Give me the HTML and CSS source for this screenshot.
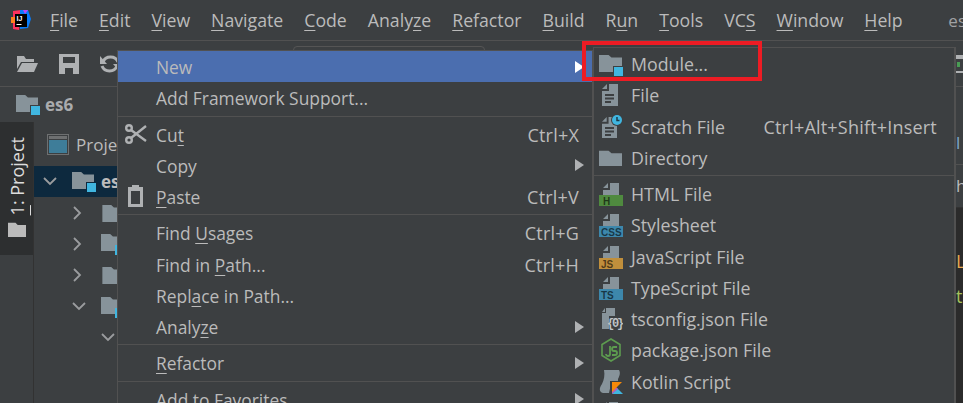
FILE: index.html
```html
<!DOCTYPE html>
<html lang="en">
<head>
<meta charset="utf-8">
<title>IDE</title>
<link rel="stylesheet" href="styles.css">
</head>
<body>
<svg class="defs" width="0" height="0">
<defs>
<symbol id="folder" viewBox="0 0 24 20" preserveAspectRatio="none"><path d="M0 1h10l3 3h11v16H0z"/></symbol>
<symbol id="doc" viewBox="0 0 16 22" preserveAspectRatio="none"><path d="M7 0h9v22H0V7h7z"/><path d="M5 0v5H0z"/></symbol>
</defs>
</svg>
<div class="ide">
<header class="menubar">
<svg class="logo" width="20" height="20" viewBox="0 0 20 20"><path fill="#fe315d" d="M2 1 10 0 8 20l-6-1z"/><path fill="#087cfa" d="M9 0h8l3 9-3 9-8 1z"/><path fill="#b74af7" d="M12 0h5l-3 4z"/><path fill="#fc801d" d="M0 7h5v6H0z"/><rect x="4" y="4" width="12" height="13" fill="#000"/><text x="5.500" y="10.500" class="logo-t">IJ</text><rect x="5.500" y="14" width="5" height="1" fill="#fff"/></svg>
<nav class="menus">
<span><u>F</u>ile</span><span><u>E</u>dit</span><span><u>V</u>iew</span><span><u>N</u>avigate</span><span><u>C</u>ode</span><span>Analy<u>z</u>e</span><span><u>R</u>efactor</span><span><u>B</u>uild</span><span>R<u>u</u>n</span><span><u>T</u>ools</span><span>VC<u>S</u></span><span><u>W</u>indow</span><span><u>H</u>elp</span>
</nav>
<span class="title">es</span>
</header>
<div class="toolbar">
<svg width="22" height="18" viewBox="0 0 22 18" fill="#afb1b3"><path d="M1 1h7l2 3h8v3H5L1 14z"/><path d="M6 8h16l-4 9H1z"/></svg>
<svg width="20" height="20" viewBox="0 0 20 20" fill="#afb1b3"><path fill-rule="evenodd" d="M0 0h20v20H0zM4 3v6h12V3zM6 14v6h8v-6z"/></svg>
<svg width="20" height="20" viewBox="0 0 20 20" fill="none" stroke="#afb1b3" stroke-width="3"><path d="M3 8a8 7.500 0 0 1 15 0M17 12a8 7.500 0 0 1-15 0"/><path fill="#afb1b3" stroke="none" d="M0 2v8h7zM20 18v-8h-7z"/></svg>
<div class="searchbox"></div>
<div class="runbox"><i class="runbar"></i><i class="runplay"></i><i class="runline"></i></div>
</div>
<div class="crumbs">
<svg class="ic" width="24" height="24" viewBox="0 0 24 24"><use href="#folder" width="22" height="18" y="1" fill="#87939a"/><rect x="14" y="12" width="10" height="10" fill="#3d3f41"/><rect x="15" y="13" width="9" height="9" fill="#40b6e0"/></svg>
<b>es6</b>
</div>
<div class="body">
<aside class="stripe">
<div class="stripe-tab">
<span class="stripe-label"><u>1</u>: Project</span>
<svg width="18" height="15" viewBox="0 0 24 20"><use href="#folder" width="24" height="20" fill="#bbb"/></svg>
</div>
</aside>
<section class="project">
<div class="project-head">
<svg width="22" height="21" viewBox="0 0 22 21"><rect x="0.500" y="0.500" width="21" height="20" fill="none" stroke="#6e7071"/><rect x="2" y="2" width="18" height="3" fill="#6e7071"/><rect x="2" y="6" width="18" height="13" fill="#3e7d99"/></svg>
<span>Project</span>
</div>
<div class="tree">
<div class="row row-sel"><svg class="chev" width="14" height="9" viewBox="0 0 14 9"><path d="M1 1l6 6 6-6"/></svg><svg width="24" height="24" viewBox="0 0 24 24"><use href="#folder" width="22" height="18" y="1" fill="#87939a"/><rect x="14" y="12" width="10" height="10" fill="#0d293e"/><rect x="15" y="13" width="9" height="9" fill="#40b6e0"/></svg><b>es6</b></div>
<div class="row row-l1"><svg class="chev" width="9" height="14" viewBox="0 0 9 14"><path d="M1 1l6 6-6 6"/></svg><svg width="24" height="18" viewBox="0 0 24 20"><use href="#folder" width="24" height="20" fill="#87939a"/></svg></div>
<div class="row row-l1"><svg class="chev" width="9" height="14" viewBox="0 0 9 14"><path d="M1 1l6 6-6 6"/></svg><svg width="24" height="24" viewBox="0 0 24 24"><use href="#folder" width="22" height="18" y="1" fill="#87939a"/><rect x="14" y="13" width="10" height="10" fill="#40b6e0"/></svg></div>
<div class="row row-l1"><svg class="chev" width="9" height="14" viewBox="0 0 9 14"><path d="M1 1l6 6-6 6"/></svg><svg width="24" height="18" viewBox="0 0 24 20"><use href="#folder" width="24" height="20" fill="#87939a"/></svg></div>
<div class="row row-l1b"><svg class="chev" width="14" height="9" viewBox="0 0 14 9"><path d="M1 1l6 6 6-6"/></svg><svg width="24" height="24" viewBox="0 0 24 24"><use href="#folder" width="22" height="18" y="1" fill="#87939a"/><rect x="14" y="13" width="10" height="10" fill="#40b6e0"/></svg></div>
<div class="row row-l2"><svg class="chev" width="14" height="9" viewBox="0 0 14 9"><path d="M1 1l6 6 6-6"/></svg></div>
</div>
</section>
<section class="editor">
<div class="ed-bar"><span class="c-l">l</span></div>
<div class="ed-bar ed-bar2"><span>h</span></div>
<div class="ed-code"><span class="c-or">L</span><span class="c-gr">t</span></div>
</section>
</div>
</div>

<div class="menu menu-main">
<div class="item active"><span class="lbl">New</span><i class="arrow white"></i></div>
<div class="item"><span class="lbl">Add Framework Support...</span></div>
<hr>
<div class="item"><svg class="mi" width="22" height="22" viewBox="0 0 22 22" fill="none" stroke="#afb1b3" stroke-width="2.400"><circle cx="4" cy="5" r="2.800"/><circle cx="4" cy="17" r="2.800"/><path d="M6 7l15 11M6 15L21 3"/></svg><span class="lbl">Cu<u>t</u></span><span class="key">Ctrl+X</span></div>
<div class="item"><span class="lbl">Copy</span><i class="arrow"></i></div>
<div class="item"><svg class="mi" width="22" height="22" viewBox="0 0 22 22"><path fill="#afb1b3" fill-rule="evenodd" d="M3 2h4V0h7v2h4v20H3zM6 6v13h9V6z"/></svg><span class="lbl"><u>P</u>aste</span><span class="key">Ctrl+V</span></div>
<hr>
<div class="item"><span class="lbl">Find <u>U</u>sages</span><span class="key">Ctrl+G</span></div>
<div class="item"><span class="lbl">Find in <u>P</u>ath...</span><span class="key">Ctrl+H</span></div>
<div class="item"><span class="lbl">Repl<u>a</u>ce in Path...</span></div>
<div class="item"><span class="lbl">Analy<u>z</u>e</span><i class="arrow"></i></div>
<hr>
<div class="item"><span class="lbl"><u>R</u>efactor</span><i class="arrow"></i></div>
<hr>
<div class="item"><span class="lbl">Add to Favorites</span><i class="arrow"></i></div>
</div>

<div class="menu menu-sub">
<div class="item"><svg class="si" viewBox="0 0 24 24"><use href="#folder" width="23" height="18" y="2" fill="#87939a"/><rect x="14" y="14" width="10" height="10" fill="#3c3f41"/><rect x="15" y="15" width="9" height="9" fill="#40b6e0"/></svg><span class="lbl">Module...</span></div>
<div class="item"><svg class="si" viewBox="0 0 24 24"><use href="#doc" x="3" y="1" width="16" height="22" fill="#87939a"/><path stroke="#3c3f41" stroke-width="2" d="M6 12h9M6 15.500h9M6 19h6"/></svg><span class="lbl">File</span></div>
<div class="item"><svg class="si" viewBox="0 0 24 24"><use href="#doc" x="3" y="2" width="15" height="21" fill="#87939a"/><path stroke="#3c3f41" stroke-width="2" d="M6 13h9M6 16.500h9M6 20h6"/><circle cx="18" cy="5" r="6" fill="#3c3f41"/><circle cx="18" cy="5" r="5" fill="#40b6e0"/><path stroke="#1c3a48" stroke-width="1.500" fill="none" d="M18 2v3.500h2.500"/></svg><span class="lbl">Scratch File</span><span class="key">Ctrl+Alt+Shift+Insert</span></div>
<div class="item"><svg class="si" viewBox="0 0 24 24"><use href="#folder" width="23" height="16" y="4" fill="#87939a"/></svg><span class="lbl">Directory</span></div>
<hr>
<div class="item"><svg class="si" viewBox="0 0 24 24"><path fill="#87939a" d="M11 1h9v12H4V8h7zM9 1v5H4z"/><rect y="13" width="24" height="11" fill="#4f8a3f"/><text x="4" y="22.500" class="badge">H</text></svg><span class="lbl">HTML File</span></div>
<div class="item"><svg class="si" viewBox="0 0 24 24"><path fill="#87939a" d="M11 1h9v12H4V8h7zM9 1v5H4z"/><rect y="13" width="24" height="11" fill="#3d87ab"/><text x="2" y="22.500" class="badge">CSS</text></svg><span class="lbl">Stylesheet</span></div>
<div class="item"><svg class="si" viewBox="0 0 24 24"><path fill="#87939a" d="M11 1h9v12H4V8h7zM9 1v5H4z"/><rect y="13" width="24" height="11" fill="#c08f3c"/><text x="2" y="22.500" class="badge">JS</text></svg><span class="lbl">JavaScript File</span></div>
<div class="item"><svg class="si" viewBox="0 0 24 24"><path fill="#87939a" d="M11 1h9v12H4V8h7zM9 1v5H4z"/><rect y="13" width="24" height="11" fill="#3d87ab"/><text x="2" y="22.500" class="badge">TS</text></svg><span class="lbl">TypeScript File</span></div>
<div class="item"><svg class="si" viewBox="0 0 24 24"><path fill="#87939a" d="M7 1h9v8h-6v13H3V6h4zM6 1v4H3z"/><text x="8" y="20" class="brace">{0}</text></svg><span class="lbl">tsconfig.json File</span></div>
<div class="item"><svg class="si" viewBox="0 0 24 24" fill="none"><path stroke="#5d9b4f" stroke-width="1.600" d="M12 1l9 5.500v11L12 23l-9-5.500v-11z"/><path stroke="#5d9b4f" stroke-width="1.800" d="M11 8v8a2 2 0 0 1-4 0M18 9h-3a1.500 1.500 0 0 0 0 4h1a1.500 1.500 0 0 1 0 4h-3"/></svg><span class="lbl">package.json File</span></div>
<div class="item"><svg class="si" viewBox="0 0 24 24"><path fill="#87939a" d="M5 0h15c2 3 0 7-1 9v5h-7l-2 9H4C0 22 0 18 3 14c2-4 3-9 2-14z"/><path fill="#3c3f41" d="M11 11h13v13H11z"/><path fill="#40b6e0" d="M13 24l5-6 6 6z"/><path fill="#b75eb8" d="M13 24v-5l3-3 3 3z"/><path fill="#f88909" d="M13 12h10l-10 10z"/></svg><span class="lbl">Kotlin Script</span></div>
<div class="item"><svg class="si" viewBox="0 0 24 24"><use href="#doc" x="3" y="1" width="16" height="22" fill="#87939a"/></svg></div>
</div>

<div class="redbox"></div>
</body>
</html>
```
FILE: styles.css
```css
* { box-sizing: border-box; }
html, body { margin: 0; height: 100%; }
body {
  position: relative;
  overflow: hidden;
  background: #3c3f41;
  color: #bbbbbb;
  font-family: "Open Sans", "Liberation Sans", sans-serif;
  font-size: 17px;
}
.defs { position: absolute; }
u { text-underline-offset: 3px; text-decoration-thickness: 1px; }

.ide { display: flex; flex-direction: column; height: 403px; }

.menubar {
  display: flex; align-items: center;
  height: 41px; padding-left: 11px;
  border-bottom: 1px solid #515151;
}
.logo-t { font: bold 7px "Liberation Sans", sans-serif; fill: #fff; }
.menus { display: flex; gap: 21px; margin-left: 19px; font-size: 17.700px; }
.title { margin-left: auto; margin-right: -3px; color: #a0a2a4; }

.toolbar {
  display: flex; align-items: center; gap: 21px;
  height: 46px; padding-left: 16px;
  border-bottom: 1px solid #515151;
}
.searchbox { align-self: flex-start; width: 192px; height: 10px; margin: 5px 0 0 152px; border: 1px solid #555; border-radius: 4px; }
.runbox { display: flex; flex-direction: column; margin-left: auto; width: 7px; height: 18px; justify-content: space-between; align-self: center; }
.runbar { display: block; height: 4px; background: #afb1b3; }
.runplay { display: block; width: 3px; height: 5px; margin-left: 1px; background: #499c54; }
.runline { display: block; height: 2px; background: #afb1b3; }

.crumbs {
  display: flex; align-items: center; gap: 5px;
  height: 35px; padding-left: 16px;
  font-size: 17px;
}
.crumbs b { font-weight: 700; color: #a9abad; }

.body { display: flex; flex: 1; min-height: 0; }
.stripe { width: 34px; flex: none; border-right: 1px solid #323232; }
.stripe-tab {
  display: flex; flex-direction: column; align-items: center; gap: 7px;
  height: 133px; background: #2d2f30; padding-top: 15px;
}
.stripe-label { writing-mode: vertical-rl; transform: rotate(180deg); color: #dcdcdc; font-size: 18px; line-height: 24px; }

.project { width: 900px; flex: none; }
.project-head { display: flex; align-items: center; gap: 7px; height: 44px; padding-left: 13px; }
.tree { display: flex; flex-direction: column; }
.row { display: flex; align-items: center; height: 31.300px; gap: 8px; }
.row-sel { background: #0d293e; height: 31px; padding-left: 9px; gap: 5px; }
.row-sel .chev { margin-right: 10px; }
.row-sel b { color: #bbb; }
.row-l1 { padding-left: 39px; gap: 19px; }
.row-l1b { padding-left: 38px; gap: 15px; }
.row-l2 { padding-left: 67px; }
.chev { fill: none; stroke: #9a9c9e; stroke-width: 1.800; flex: none; }

.editor { flex: 1; display: flex; flex-direction: column; min-width: 0; }
.ed-bar { height: 43px; padding-left: 22px; border-bottom: 1px solid #515151; line-height: 42px; white-space: nowrap; }
.ed-bar2 { border-bottom-color: #323232; }
.c-l { color: #7fa8c9; }
.ed-code {
  flex: 1; display: flex; flex-direction: column;
  background: #2b2b2b; padding: 36px 0 0 22px; font-size: 18px; line-height: 35px;
}
.c-or { color: #e8a850; }
.c-gr { color: #a5c25c; }

.menu {
  position: absolute;
  background: #3c3f41;
  border: 1px solid #515151;
  overflow: hidden;
}
.menu hr { height: 1px; border: 0; margin: 2px 0; background: #515151; }
.menu-main { left: 117px; top: 50px; width: 476px; height: 370px; font-size: 17.400px; }
.menu-sub { left: 593px; top: 47px; width: 363px; height: 370px; font-size: 17.800px; border-right-width: 2px; }
.item {
  position: relative;
  display: flex; align-items: center;
  height: 31.250px;
  padding-right: 12px;
}
.menu-main .item { padding-left: 38px; }
.menu-sub .item { padding-left: 37px; }
.item.active { background: #4b6eaf; }
.lbl { white-space: nowrap; padding-top: 1px; }
.key { margin-left: auto; font-size: 18px; letter-spacing: .2px; padding-top: 1px; }
.menu-main .key { margin-right: 1px; }
.menu-sub .key { margin-right: 5px; }
.mi { position: absolute; left: 7px; top: 4px; }
.si { position: absolute; left: 5px; top: 4px; width: 24px; height: 24px; }
.arrow {
  margin-left: auto;
  width: 0; height: 0;
  border-left: 9px solid #afb1b3;
  border-top: 6px solid transparent;
  border-bottom: 6px solid transparent;
  margin-right: -4px;
}
.arrow.white { border-left-color: #fff; }
.badge { font: bold 10px "Liberation Sans", sans-serif; fill: #000; fill-opacity: .6; }
.brace { font: bold 12px "Liberation Mono", monospace; fill: #c0c4c7; letter-spacing: -2.200px; }
.redbox {
  position: absolute; left: 582px; top: 41px; width: 180px; height: 40px;
  border: 4px solid #ed1c24;
}
```
